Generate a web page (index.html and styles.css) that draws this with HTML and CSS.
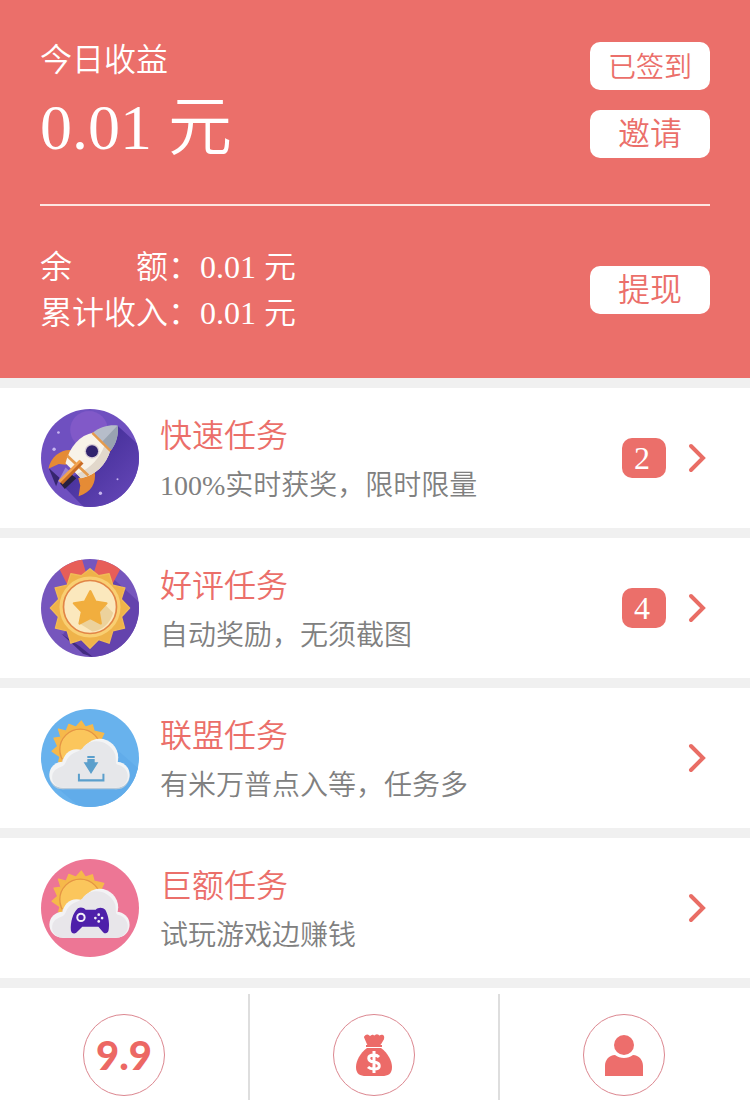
FILE: index.html
```
<!DOCTYPE html>
<html lang="zh-CN">
<head>
  <meta charset="UTF-8">
  <meta name="viewport" content="width=device-width, initial-scale=1">
  <title>今日收益</title>
  <link rel="stylesheet" href="styles.css">
</head>
<body>
  <!-- 收益 -->
  <header class="income">
    <div class="today">
      <div>
        <div class="label">今日收益</div>
        <div class="amount">0.01 元</div>
      </div>
      <div class="actions">
        <button type="button" class="btn signed">已签到</button>
        <button type="button" class="btn">邀请</button>
      </div>
    </div>
    <div class="balance">
      <div>
        <div>余　　额：0.01 元</div>
        <div>累计收入：0.01 元</div>
      </div>
      <button type="button" class="btn">提现</button>
    </div>
  </header>

  <!-- 任务列表 -->
  <main class="tasks">
    <a class="task" href="#fast">
      <svg class="task-icon" viewBox="35 30 292 292">
        <defs>
          <clipPath id="disc"><circle cx="181" cy="176" r="146"/></clipPath>
          <linearGradient id="shade" x1="0" y1="0" x2="1" y2="1">
            <stop offset="0.3" stop-color="#46309a"/>
            <stop offset="1" stop-color="#6b4bbd"/>
          </linearGradient>
        </defs>
        <g clip-path="url(#disc)">
          <rect x="35" y="30" width="292" height="292" fill="#6f50c0"/>
          <circle cx="178" cy="92" r="56" fill="#8159c8"/>
          <path d="M263 80L340 150V330H170L92 250L190 200Z" fill="url(#shade)"/>
          <path d="M58 206L90 235L80 260Z" fill="#36256f"/>
          <path d="M124 152C94 150 64 172 57 208L88 194L110 196Z" fill="#e58b35"/>
          <path d="M195 216C200 250 185 278 147 290L152 258L146 236Z" fill="#e58b35"/>
          <path d="M108 204L122 216L92 250L86 246Z" fill="#9a83d4"/>
          <path d="M122 222L140 236L106 268L92 252Z" fill="#28203f"/>
          <path d="M192 100C150 108 120 142 108 192L154 236C196 228 230 196 242 152Z" fill="#f8f3e8"/>
          <path d="M242 152C230 196 196 228 154 236L142 224C184 206 212 174 224 139Z" fill="#e2d8cb"/>
          <path d="M190 100C212 82 240 76 263 79C267 105 260 132 243 154Z" fill="#b6bdca"/>
          <path d="M263 79C267 105 260 132 243 154L218 127Z" fill="#98a3b1"/>
          <path d="M188 101L242 155" stroke="#e59a4b" stroke-width="7"/>
          <path d="M113 169L176 228" stroke="#e59a4b" stroke-width="8"/>
          <path d="M157 188L95 250" stroke="#c86b24" stroke-width="13"/>
          <path d="M152 184L90 246" stroke="#f1a24e" stroke-width="8"/>
          <circle cx="187" cy="156" r="22" fill="#d8cdd6"/>
          <circle cx="187" cy="156" r="18" fill="#30236e"/>
          <g fill="#c7b6ef">
            <circle cx="87" cy="100" r="4"/><circle cx="74" cy="150" r="5"/>
            <circle cx="212" cy="281" r="5"/><circle cx="263" cy="239" r="3"/>
          </g>
        </g>
      </svg>
      <div class="task-text">
        <h2>快速任务</h2>
        <p>100%实时获奖，限时限量</p>
      </div>
      <span class="count">2</span>
      <svg class="arrow" viewBox="0 0 20 30"><path d="M3 3L15 15L3 27"/></svg>
    </a>

    <a class="task" href="#review">
      <svg class="task-icon" viewBox="35 30 292 292">
        <g clip-path="url(#disc)">
          <rect x="35" y="30" width="292" height="292" fill="#7656bd"/>
          <path d="M238 78L340 170V330H190L100 255Z" fill="#6443ad"/>
          <path d="M95 252L150 290L190 322L160 312Z" fill="#432b80"/>
          <path d="M75 30H157L175 90L118 116Z" fill="#e75e59"/>
          <path d="M205 30H287L244 112L187 88Z" fill="#e75e59"/>
          <path d="M181 59L207 80L238 74L249 108L285 116L274 150L299 176L275 202L284 236L249 244L238 281L207 270L181 296L155 270L124 281L113 244L78 236L87 202L63 176L88 150L77 116L113 108L124 74L155 80Z" fill="#efb34a" stroke="#f1ba55" stroke-width="4" stroke-linejoin="round"/>
          <circle cx="181" cy="173" r="91" fill="#f9cf72"/>
          <circle cx="181" cy="173" r="79" fill="#fbe8bd" stroke="#e28546" stroke-width="5"/>
          <path d="M220 160L250 190C242 222 215 244 188 246L150 222Z" fill="#ecd29c"/>
          <path d="M182 126L197 157L230 162L207 187L213 222L182 206L150 222L157 187L133 162L166 157Z" fill="#f1ae3e" stroke="#f1ae3e" stroke-width="7" stroke-linejoin="round"/>
        </g>
      </svg>
      <div class="task-text">
        <h2>好评任务</h2>
        <p>自动奖励，无须截图</p>
      </div>
      <span class="count">4</span>
      <svg class="arrow" viewBox="0 0 20 30"><path d="M3 3L15 15L3 27"/></svg>
    </a>

    <a class="task" href="#union">
      <svg class="task-icon" viewBox="35 30 292 292">
        <defs>
          <g id="sun">
            <path d="M155 66L167 84L188 77L193 96L222 103L214 119L236 135L215 150L224 179L205 185L150 228L100 195L88 186L92 172L68 156L85 141L74 117L95 114L87 90L110 96L118 76L139 84Z" fill="#f6b94a" stroke="#f6b94a" stroke-width="4" stroke-linejoin="round"/>
            <circle cx="152" cy="151" r="61" fill="#fbc65c" stroke="#e59545" stroke-width="4"/>
          </g>
          <g id="cloud">
            <circle cx="99" cy="226" r="39"/><circle cx="141" cy="191" r="41"/>
            <circle cx="210" cy="174" r="55"/><circle cx="260" cy="226" r="39"/>
            <rect x="99" y="180" width="161" height="85"/>
          </g>
        </defs>
        <g clip-path="url(#disc)">
          <rect x="35" y="30" width="292" height="292" fill="#68b2ed"/>
          <path d="M260 150L340 220V330H160L85 266Z" fill="#61acea"/>
          <use href="#sun"/>
          <use href="#cloud" y="4" fill="#b8c9d8"/>
          <use href="#cloud" fill="#f3f4f5"/>
          <path d="M158 148C180 116 236 118 256 165C260 185 256 192 262 195C290 200 300 228 290 245C282 260 272 262 262 265H99C72 262 64 240 70 222C80 200 100 208 108 190C120 158 146 160 158 148Z" fill="#e6e7ea"/>
          <g fill="#5b9fcc">
            <path d="M173 170H195V176H173ZM173 179H195V189H206L184 224L162 189H173Z"/>
            <path d="M145 223H151V239H218V223H224V246H145Z"/>
          </g>
        </g>
      </svg>
      <div class="task-text">
        <h2>联盟任务</h2>
        <p>有米万普点入等，任务多</p>
      </div>
      <svg class="arrow" viewBox="0 0 20 30"><path d="M3 3L15 15L3 27"/></svg>
    </a>

    <a class="task" href="#huge">
      <svg class="task-icon" viewBox="35 30 292 292">
        <g clip-path="url(#disc)">
          <rect x="35" y="30" width="292" height="292" fill="#ed7695"/>
          <use href="#sun"/>
          <use href="#cloud" fill="#f3f3f5"/>
          <path d="M158 148C180 116 236 118 256 165C260 185 256 192 262 195C290 200 300 228 290 245C282 260 272 262 262 265H99C72 262 64 240 70 222C80 200 100 208 108 190C120 158 146 160 158 148Z" fill="#e8e6ea"/>
          <path d="M145 177C153 172 163 175 168 181H198C206 173 219 173 227 182C237 200 240 226 236 244C234 252 226 254 220 248L206 232H158L140 250C132 255 125 250 124 242C122 220 130 190 145 177Z" fill="#4e20aa"/>
          <circle cx="154" cy="204" r="11" fill="none" stroke="#f2eff8" stroke-width="6"/>
          <g fill="#f2eff8">
            <circle cx="207" cy="196" r="4"/><circle cx="207" cy="216" r="4"/>
            <circle cx="197" cy="206" r="4"/><circle cx="217" cy="206" r="4"/>
          </g>
        </g>
      </svg>
      <div class="task-text">
        <h2>巨额任务</h2>
        <p>试玩游戏边赚钱</p>
      </div>
      <svg class="arrow" viewBox="0 0 20 30"><path d="M3 3L15 15L3 27"/></svg>
    </a>
  </main>

  <!-- 底部导航 -->
  <nav class="tabs">
    <a href="#deals"><span class="ring deals">9.9</span></a>
    <a href="#money" aria-label="赚钱">
      <span class="ring">
        <svg viewBox="0 0 80 80">
          <path d="M31 22C33 19 35 21 36 23C38 19 40 21 40 23C42 19 44 20 45 22C47 20 50 20 49 24L46 29H34Z" fill="#ec6b68" stroke="#ec6b68" stroke-width="2" stroke-linejoin="round"/>
          <path d="M32 31H48" stroke="#ec6b68" stroke-width="2"/>
          <path d="M33 33H47C54 38 58 46 58 52C58 59 54 61 48 61H32C26 61 22 59 22 52C22 46 26 38 33 33Z" fill="#ec6b68"/>
          <path d="M45 42C43 40 41 40 40 40C33 40 33 46 40 47C47 48 47 54 40 54C38 54 36 54 34 52M40 36V58" fill="none" stroke="#fff" stroke-width="3"/>
        </svg>
      </span>
    </a>
    <a href="#mine" aria-label="我的">
      <span class="ring">
        <svg viewBox="0 0 80 80" fill="#ed6e6c">
          <circle cx="40" cy="30" r="10"/>
          <path d="M31 40C36 44 44 44 49 40C55 40 59 45 59 51V61H21V51C21 45 25 40 31 40Z"/>
        </svg>
      </span>
    </a>
  </nav>
</body>
</html>
```
FILE: styles.css
```
* {
  box-sizing: border-box;
}

body {
  margin: 0;
  background: #f0f0f0;
  font-family: "Liberation Serif", "Noto Sans CJK SC", serif;
  font-size: 32px;
  font-weight: 350;
}

a {
  color: inherit;
  text-decoration: none;
}

/* 收益 */
.income {
  padding: 42px 40px;
  background: #eb6f6a;
  color: #fff;
}

.today,
.balance {
  display: flex;
  justify-content: space-between;
}

.today {
  padding-bottom: 36px;
  border-bottom: 2px solid #fde6e2;
}

.label {
  line-height: 36px;
}

.amount {
  margin-top: 10px;
  font-size: 64px;
  line-height: 80px;
}

.actions {
  display: flex;
  flex-direction: column;
  gap: 20px;
}

.btn {
  width: 120px;
  height: 48px;
  padding: 0;
  border: none;
  border-radius: 10px;
  background: #fff;
  color: #eb6f6a;
  font: inherit;
  line-height: 48px;
  cursor: pointer;
}

.signed {
  padding-top: 2px;
  font-size: 28px;
}

.balance {
  align-items: center;
  padding-top: 38px;
  line-height: 46px;
}

/* 任务列表 */
.tasks {
  display: flex;
  flex-direction: column;
  gap: 10px;
  padding: 10px 0;
}

.task {
  display: flex;
  align-items: center;
  height: 140px;
  padding: 0 42px 0 41px;
  background: #fff;
}

.task-icon {
  width: 98px;
  height: 98px;
  flex: none;
}

.task-text {
  flex: 1;
  margin-left: 21px;
  padding-top: 6px;
}

.task h2 {
  margin: 0;
  color: #eb6f6a;
  font-size: 32px;
  font-weight: 350;
  line-height: 50px;
}

.task p {
  margin: 0;
  color: #808080;
  font-size: 28px;
  line-height: 50px;
}

.count {
  width: 44px;
  height: 40px;
  margin-right: 22px;
  padding-right: 4px;
  border-radius: 10px;
  background: #eb6f6a;
  color: #fff;
  line-height: 40px;
  text-align: center;
}

.arrow {
  width: 20px;
  height: 30px;
  fill: none;
  stroke: #e96d65;
  stroke-width: 4;
  stroke-linecap: round;
}

/* 底部导航 */
.tabs {
  display: grid;
  grid-template-columns: repeat(3, 1fr);
  padding-top: 6px;
  background: #fff;
}

.tabs a {
  display: flex;
  justify-content: center;
  padding: 20px 0 4px;
  border-right: 2px solid #dedede;
}

.tabs a:last-child {
  border-color: transparent;
}

.ring {
  width: 82px;
  height: 82px;
  border: 1px solid #dc8790;
  border-radius: 50%;
}

.ring svg {
  display: block;
}

.deals {
  color: #ec6864;
  font-family: Lato, sans-serif;
  font-size: 40px;
  font-weight: 900;
  line-height: 80px;
  text-align: center;
}
```
